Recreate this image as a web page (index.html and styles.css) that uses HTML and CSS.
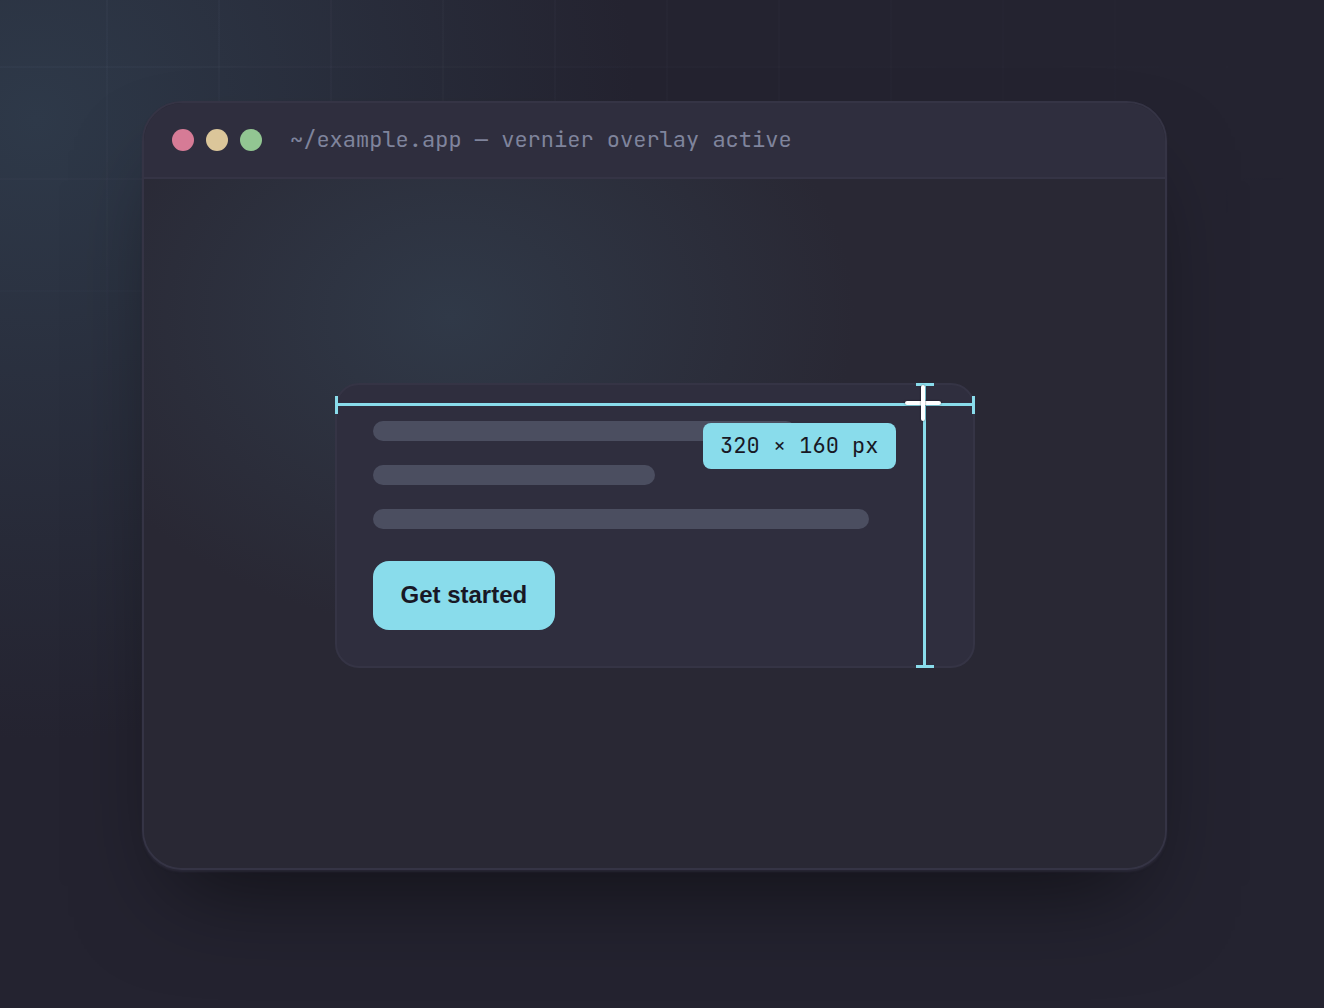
FILE: index.html
```html
<!DOCTYPE html>
<html lang="en">

<head>
    <meta charset="UTF-8">
    <meta name="viewport" content="width=device-width, initial-scale=1.0">
    <title>Vernier</title>
    <link rel="stylesheet" href="styles.css">
</head>

<body>
    <main class="stage">
        <div class="window">
            <!-- title bar -->
            <header class="titlebar">
                <span class="dot red"></span>
                <span class="dot yellow"></span>
                <span class="dot green"></span>
                <span class="title">~/example.app — vernier overlay active</span>
            </header>

            <div class="content">
                <div class="card">
                    <div class="bar bar-medium"></div>
                    <div class="bar bar-short"></div>
                    <div class="bar bar-long"></div>
                    <button class="start" type="button">Get started</button>

                    <!-- measuring overlay on top of the card -->
                    <div class="overlay">
                        <div class="line-x"></div>
                        <div class="line-y"></div>
                        <div class="tag">320 × 160 px</div>
                        <div class="cursor"></div>
                    </div>
                </div>
            </div>
        </div>
    </main>
</body>

</html>
```

FILE: styles.css
```css
* {
    box-sizing: border-box;
}

body {
    margin: 0;
    background: #242330;
    font-family: "Liberation Sans", Arial, sans-serif;
}

.stage {
    position: relative;
    display: flex;
    min-height: 100vh;
    padding: 101px 157px 138px 142px;
    overflow: hidden;
    background: radial-gradient(600px 620px at 36px 120px, #2e3949, #242330);
}

/* faint grid, fades out to the bottom right */
.stage::before {
    content: "";
    position: absolute;
    inset: 0;
    background-image:
        linear-gradient(to right, rgba(205, 214, 244, 0.03) 2px, transparent 2px),
        linear-gradient(to bottom, rgba(205, 214, 244, 0.03) 2px, transparent 2px);
    background-size: 112px 112px;
    background-position: 106px 66px;
    -webkit-mask-image: radial-gradient(1500px 460px at 0 0, #000, transparent);
    mask-image: radial-gradient(1500px 460px at 0 0, #000, transparent);
}

.window {
    position: relative;
    display: flex;
    flex: 1;
    flex-direction: column;
    overflow: hidden;
    background: #292834;
    border: 2px solid #353445;
    border-radius: 40px;
    box-shadow: 0 2px 2px rgba(53, 52, 69, 0.5), 0 48px 96px -32px rgba(0, 0, 0, 0.55);
}

.titlebar {
    display: flex;
    align-items: center;
    gap: 12px;
    height: 76px;
    padding: 0 28px;
    background: #2f2e3e;
    border-bottom: 2px solid #353445;
}

.dot {
    width: 22px;
    height: 22px;
    border-radius: 50%;
}

.red {
    background: #d67b96;
}

.yellow {
    background: #dbc69a;
}

.green {
    background: #92c692;
}

.title {
    margin-left: 16px;
    padding-bottom: 2px;
    color: #7f849c;
    font-family: "JetBrains Mono", "DejaVu Sans Mono", monospace;
    font-size: 22px;
    white-space: nowrap;
}

.content {
    display: flex;
    flex: 1;
    align-items: center;
    justify-content: center;
    padding-top: 4px;
    background: radial-gradient(ellipse at 30% 20%, #303948, #292834 40%);
}

.card {
    position: relative;
    width: 640px;
    padding: 36px;
    background: #2f2e3e;
    border: 2px solid #353445;
    border-radius: 24px;
}

.bar {
    height: 20px;
    margin-bottom: 24px;
    border-radius: 10px;
    background: #4b4e60;
}

.bar-medium {
    width: 75%;
}

.bar-short {
    width: 50%;
}

.bar-long {
    width: 88%;
    margin-bottom: 32px;
}

.start {
    display: block;
    height: 69px;
    padding: 0 28px 2px;
    border: none;
    border-radius: 16px;
    background: #89dceb;
    color: #181825;
    font-family: inherit;
    font-size: 24px;
    font-weight: bold;
    cursor: pointer;
}

.overlay {
    position: absolute;
    inset: -2px;
}

/* the side borders are the end caps, the gradient is the rule */
.line-x {
    position: absolute;
    top: 13px;
    left: 0;
    right: 0;
    height: 18px;
    border: solid #89dceb;
    border-width: 0 3px;
    background: linear-gradient(#89dceb, #89dceb) 0 7px / 100% 3px no-repeat;
}

.line-y {
    position: absolute;
    top: 0;
    bottom: 0;
    right: 41px;
    width: 18px;
    border: solid #89dceb;
    border-width: 3px 0;
    background: linear-gradient(#89dceb, #89dceb) 7px 0 / 3px 100% no-repeat;
}

.tag {
    position: absolute;
    top: 40px;
    right: 79px;
    padding: 0 17px;
    border-radius: 8px;
    background: #89dceb;
    color: #181825;
    font-family: "JetBrains Mono", "DejaVu Sans Mono", monospace;
    font-size: 22px;
    line-height: 46px;
    white-space: nowrap;
}

.cursor {
    position: absolute;
    top: 2px;
    right: 34px;
    width: 36px;
    height: 36px;
}

.cursor::before,
.cursor::after {
    content: "";
    position: absolute;
    border-radius: 2px;
    background: #fff;
    box-shadow: 0 0 2px rgba(0, 0, 0, 0.6);
}

.cursor::before {
    top: 16px;
    left: 0;
    width: 36px;
    height: 4px;
}

.cursor::after {
    top: 0;
    left: 16px;
    width: 4px;
    height: 36px;
}
```
